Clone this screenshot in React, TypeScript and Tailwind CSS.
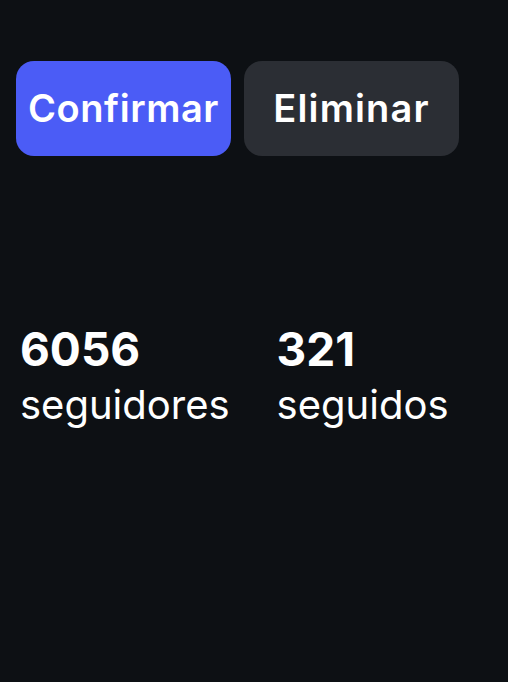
export default function App() {
  return (
    <div
      className="min-h-[682px] w-full bg-[#0d1014] text-white"
      style={{ fontFamily: "Inter, 'Noto Sans', sans-serif" }}
    >
      <div className="flex gap-[13px] px-4 pt-[61px]">
        <button className="flex h-[95px] w-[215px] items-center justify-center rounded-[18px] bg-[#4b5cf6] text-[38px] font-semibold tracking-[0.015em] text-white">
          Confirmar
        </button>
        <button className="flex h-[95px] w-[215px] items-center justify-center rounded-[18px] bg-[#2b2e34] text-[38px] font-semibold tracking-[0.03em] text-white">
          Eliminar
        </button>
      </div>

      <div className="mt-[168px] flex gap-[47px] px-5">
        <div className="flex flex-col">
          <span className="text-[46px] font-bold leading-[50px]">6056</span>
          <span className="text-[40px] leading-[62px]">seguidores</span>
        </div>
        <div className="flex flex-col">
          <span className="text-[46px] font-bold leading-[50px]">321</span>
          <span className="text-[40px] leading-[62px]">seguidos</span>
        </div>
      </div>
    </div>
  );
}
